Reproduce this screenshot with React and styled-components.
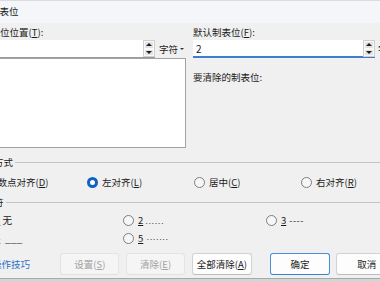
import React from 'react';
import styled, { createGlobalStyle } from 'styled-components';

const GlobalStyle = createGlobalStyle`
  html, body {
    margin: 0;
    padding: 0;
    background: #d6d6d6;
  }
  body {
    font-family: "Noto Sans CJK SC", "Noto Sans", sans-serif;
    font-size: 9.5px;
    color: #1b1b1b;
  }
`;

const Screen = styled.div`
  width: 380px;
  height: 282px;
  overflow: hidden;
  background: #d4d4d4;
`;

const Dialog = styled.div`
  width: 440px;
  margin-left: -31px;
  background: #f0f0f0;
  border-top: 1px solid #d9dde2;
  border-bottom: 1px solid #a9a9a9;
`;

const TitleBar = styled.div`
  height: 22px;
  line-height: 21px;
  padding-left: 21px;
  background: #f4f6f9;
  font-size: 9.5px;
  color: #1a1a1a;
`;

const Body = styled.div`
  padding: 3px 12px 3px 12px;
`;

const TopGrid = styled.div`
  display: grid;
  grid-template-columns: 205px auto;
  column-gap: 7px;
`;

const Column = styled.div`
  display: flex;
  flex-direction: column;
`;

const Label = styled.div`
  height: 12px;
  line-height: 12px;
  white-space: nowrap;
  margin-top: ${p => p.$top || 0}px;
  margin-bottom: ${p => p.$bottom || 0}px;
`;

const FieldRow = styled.div`
  display: flex;
  align-items: center;
  gap: ${p => p.$gap || 4}px;
`;

const SpinBox = styled.div`
  display: flex;
  width: ${p => p.$width}px;
  height: 18px;
  box-sizing: border-box;
  background: #ffffff;
  border-bottom: ${p => (p.$focused ? '2px solid #3c7fd0' : '1px solid #9a9a9a')};
`;

const InputText = styled.div`
  flex: 1;
  padding: 0 3px;
  line-height: 17px;
  font-size: 10px;
`;

const Spinner = styled.div`
  display: flex;
  flex-direction: column;
  width: 12px;
  height: 17px;
  box-sizing: border-box;
  border: 1px solid #cfcfcf;
  background: #f2f2f2;
`;

const SpinButton = styled.div`
  flex: 1;
  display: flex;
  align-items: center;
  justify-content: center;
  background: #e3e3e3;
  border: 1px solid #fafafa;
`;

const Arrow = styled.div`
  width: 0;
  height: 0;
  border-left: 3px solid transparent;
  border-right: 3px solid transparent;
  ${p => (p.$down ? 'border-top: 3px solid #1e1e1e;' : 'border-bottom: 3px solid #1e1e1e;')}
`;

const Unit = styled.div`
  display: flex;
  align-items: center;
  gap: 2px;
  white-space: nowrap;
`;

const Caret = styled.span`
  width: 0;
  height: 0;
  border-left: 2px solid transparent;
  border-right: 2px solid transparent;
  border-top: 2px solid #333;
`;

const ListBox = styled.div`
  height: 90px;
  box-sizing: border-box;
  background: #ffffff;
  border: 1px solid #a3a3a3;
`;

const Group = styled.div`
  margin-top: ${p => p.$top}px;
`;

const GroupHeader = styled.div`
  display: flex;
  align-items: center;
  gap: 2px;
  height: 12px;
  line-height: 12px;
  margin-left: -6px;
`;

const GroupLine = styled.div`
  flex: 1;
  height: 1px;
  background: #c3c3c3;
`;

const OptionGrid = styled.div`
  display: grid;
  grid-template-columns: ${p => p.$columns};
  row-gap: 4px;
  padding-top: ${p => p.$pad}px;
  margin-left: ${p => p.$shift}px;
`;

const Option = styled.div`
  display: flex;
  align-items: center;
  gap: 4px;
  height: 14px;
  white-space: nowrap;
`;

const Radio = styled.span`
  width: 11px;
  height: 11px;
  box-sizing: border-box;
  border-radius: 50%;
  flex: none;
  ${p =>
    p.$checked
      ? 'background: #ffffff; border: 3px solid #0f62c4;'
      : 'background: #f7f7f7; border: 1px solid #7d7d7d;'}
`;

const Leader = styled.span`
  font-family: "Liberation Sans", Arial, sans-serif;
  color: #444;
  letter-spacing: ${p => p.$spacing || 0}px;
  margin-left: ${p => p.$gap}px;
`;

const ButtonRow = styled.div`
  display: flex;
  align-items: center;
  margin-top: 8px;
`;

const HelpLink = styled.div`
  width: 81px;
  box-sizing: border-box;
  padding-left: 11px;
  color: #2d6fcb;
  white-space: nowrap;
`;

const Button = styled.div`
  width: ${p => p.$width}px;
  height: 22px;
  margin-left: ${p => p.$gap || 0}px;
  box-sizing: border-box;
  display: flex;
  align-items: center;
  justify-content: center;
  border-radius: 3px;
  white-space: nowrap;
  background: ${p => (p.$disabled ? '#f5f5f5' : '#fdfdfd')};
  color: ${p => (p.$disabled ? '#a2a2a2' : '#1b1b1b')};
  border: 1px solid ${p => (p.$primary ? '#4a8fdb' : p.$disabled ? '#e4e4e4' : '#d2d2d2')};
  border-bottom-color: ${p => (p.$primary ? '#3a7fd0' : p.$disabled ? '#e0e0e0' : '#bdbdbd')};
`;

const SpinField = ({ width, value, focused }) => (
  <SpinBox $width={width} $focused={focused}>
    <InputText>{value}</InputText>
    <Spinner>
      <SpinButton><Arrow /></SpinButton>
      <SpinButton><Arrow $down /></SpinButton>
    </Spinner>
  </SpinBox>
);

const alignments = [
  { key: 'D', text: '小数点对齐' },
  { key: 'L', text: '左对齐', checked: true },
  { key: 'C', text: '居中' },
  { key: 'R', text: '右对齐' },
];

const leaders = [
  { n: '1', sample: '无', plain: true },
  { n: '2', sample: '......', spacing: 0.5, gap: 2 },
  { n: '3', sample: '----', spacing: 0.5, gap: 3 },
  { n: '4', sample: '___', spacing: 0.5, gap: 5 },
  { n: '5', sample: '·······', spacing: 0, gap: 3 },
];

export default function App() {
  return (
    <>
      <GlobalStyle />
      <Screen>
        <Dialog>
          <TitleBar>制表位</TitleBar>
          <Body>
            <TopGrid>
              <Column>
                <Label $bottom={2}>制表位位置(<u>T</u>):</Label>
                <FieldRow>
                  <SpinField width={174} value="" />
                  <Unit>字符<Caret /></Unit>
                </FieldRow>
                <ListBox />
              </Column>
              <Column>
                <Label $bottom={2}>默认制表位(<u>F</u>):</Label>
                <FieldRow $gap={3}>
                  <SpinField width={182} value="2" focused />
                  <Unit>字符<Caret /></Unit>
                </FieldRow>
                <Label $top={13}>要清除的制表位:</Label>
              </Column>
            </TopGrid>

            <Group $top={8}>
              <GroupHeader>
                对齐方式
                <GroupLine />
              </GroupHeader>
              <OptionGrid $columns="114px 107px 107px 107px" $shift={-8} $pad={7}>
                {alignments.map(a => (
                  <Option key={a.key}>
                    <Radio $checked={a.checked} />
                    <span>{a.text}(<u>{a.key}</u>)</span>
                  </Option>
                ))}
              </OptionGrid>
            </Group>

            <Group $top={7}>
              <GroupHeader>
                前导符
                <GroupLine />
              </GroupHeader>
              <OptionGrid $columns="143px 143px 143px" $shift={-1} $pad={5}>
                {leaders.map(l => (
                  <Option key={l.n}>
                    <Radio />
                    <span>
                      <u>{l.n}</u>
                      {l.plain ? (
                        <span> {l.sample}</span>
                      ) : (
                        <Leader $spacing={l.spacing} $gap={l.gap}>{l.sample}</Leader>
                      )}
                    </span>
                  </Option>
                ))}
              </OptionGrid>
            </Group>

            <ButtonRow>
              <HelpLink>操作技巧</HelpLink>
              <Button $width={60} $disabled>设置(<u>S</u>)</Button>
              <Button $width={60} $gap={7} $disabled>清除(<u>E</u>)</Button>
              <Button $width={61} $gap={7}>全部清除(<u>A</u>)</Button>
              <Button $width={62} $gap={18} $primary>确定</Button>
              <Button $width={62} $gap={6}>取消</Button>
            </ButtonRow>
          </Body>
        </Dialog>
      </Screen>
    </>
  );
}
